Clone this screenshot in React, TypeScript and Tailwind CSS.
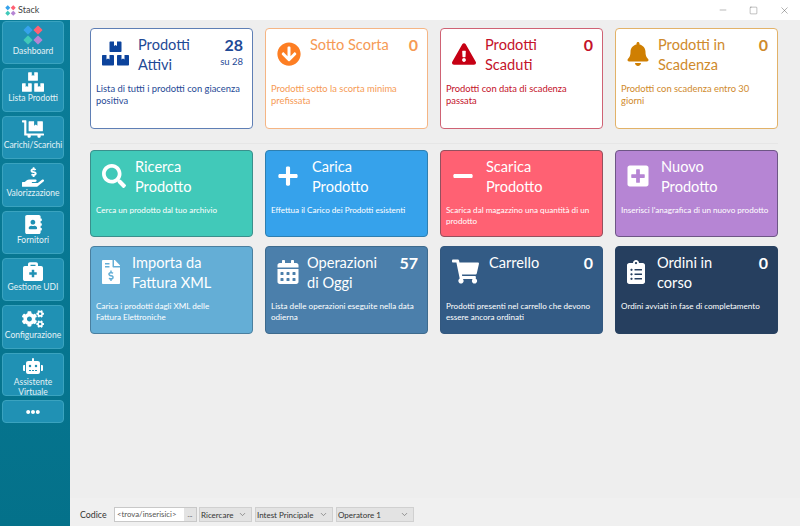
import React from 'react';
import {
  FaAddressBook,
  FaArrowCircleDown,
  FaBell,
  FaBoxes,
  FaBriefcaseMedical,
  FaCalendarAlt,
  FaClipboardList,
  FaCogs,
  FaDollyFlatbed,
  FaEllipsisH,
  FaExclamationTriangle,
  FaFileInvoiceDollar,
  FaHandHoldingUsd,
  FaMinus,
  FaPlus,
  FaPlusSquare,
  FaRobot,
  FaSearch,
  FaShoppingCart,
} from 'react-icons/fa';
import { ChevronDown, Minus, Square, X } from 'lucide-react';

interface CardProps {
  icon: React.ReactNode;
  iconBox: string;
  title: React.ReactNode;
  value?: string;
  sub?: string;
  text: React.ReactNode;
  textSize?: string;
  box: string;
  textColor: string;
}

// Four coloured diamonds, used by the window logo and the Dashboard button
function Diamonds({ size }: { size: number }): React.ReactElement {
  return (
    <svg width={size} height={size} viewBox="0 0 24 24">
      <rect x="2" y="2" width="8" height="8" rx="1" transform="rotate(45 6 6)" fill="#36a2eb" />
      <rect x="14" y="2" width="8" height="8" rx="1" transform="rotate(45 18 6)" fill="#ff6173" />
      <rect x="2" y="14" width="8" height="8" rx="1" transform="rotate(45 6 18)" fill="#41c9b9" />
      <rect x="14" y="14" width="8" height="8" rx="1" transform="rotate(45 18 18)" fill="#b685d4" />
    </svg>
  );
}

function SideButton({
  icon,
  label,
}: {
  icon: React.ReactNode;
  label: React.ReactNode;
}): React.ReactElement {
  return (
    <div className="flex h-[43.4px] w-[62px] flex-col items-center rounded-[4px] border border-[#3aa3bf] bg-[#2091b4] pt-[2px] text-center text-[8.5px] leading-[9.5px] text-[#e4f2f6]">
      <div className="flex h-[21px] shrink-0 items-center justify-center text-white">{icon}</div>
      <div className="mt-[1.5px] whitespace-nowrap">{label}</div>
    </div>
  );
}

function Card({
  icon,
  iconBox,
  title,
  value,
  sub,
  text,
  textSize = 'text-[8.1px] leading-[11px]',
  box,
  textColor,
}: CardProps): React.ReactElement {
  return (
    <div className={`h-full rounded-[4px] border px-[5px] pt-[5px] ${box} ${textColor}`}>
      <div className="flex h-[49px] items-start">
        <div className={`flex h-[38px] shrink-0 items-center justify-start pt-[1px] ${iconBox}`}>{icon}</div>
        <div className="flex-1 pt-[1px] text-[14.6px] leading-[19.5px] font-normal">{title}</div>
        <div className="flex flex-col items-end pt-[1px] pr-[4px]">
          <div className="text-[16px] leading-[20px] font-bold">{value}</div>
          {sub && <div className="mt-[2px] text-[9.5px] leading-[10px]">{sub}</div>}
        </div>
      </div>
      <p className={textSize}>{text}</p>
    </div>
  );
}

function Select({ label, width }: { label: string; width: string }): React.ReactElement {
  return (
    <div className={`flex h-[15px] items-center justify-between border border-[#d0d0d0] bg-[#e3e3e3] pr-[4px] pl-[1px] text-[8px] whitespace-nowrap ${width}`}>
      <span>{label}</span>
      <ChevronDown size={9} className="text-[#777777]" />
    </div>
  );
}

const TOP_TEXT = 'text-[9.4px] leading-[12px]';

export default function App(): React.ReactElement {
  return (
    <div className="flex h-[526px] w-[800px] flex-col overflow-hidden bg-[#eeeeee] font-['Lato',sans-serif]">
      {/* Window title bar */}
      <div className="flex h-[20px] shrink-0 items-center bg-white pl-[5px] text-[9px] text-[#444444]">
        <Diamonds size={11} />
        <span className="ml-[2px]">Stack</span>
        <div className="ml-auto flex items-center gap-[21px] pr-[10px] text-[#555555]">
          <Minus size={10} strokeWidth={1} />
          <Square size={9} strokeWidth={1} />
          <X size={11} strokeWidth={1} />
        </div>
      </div>

      <div className="flex min-h-0 flex-1">
        {/* Left menu */}
        <div className="flex w-[70px] shrink-0 flex-col gap-[4px] bg-gradient-to-b from-[#0b7d99] to-[#04718a] pt-[1px] pl-[2px]">
          <SideButton icon={<Diamonds size={20} />} label="Dashboard" />
          <SideButton icon={<FaBoxes size={22} />} label="Lista Prodotti" />
          <SideButton icon={<FaDollyFlatbed size={22} />} label="Carichi/Scarichi" />
          <SideButton icon={<FaHandHoldingUsd size={22} />} label="Valorizzazione" />
          <SideButton icon={<FaAddressBook size={19} />} label="Fornitori" />
          <SideButton icon={<FaBriefcaseMedical size={20} />} label="Gestione UDI" />
          <SideButton icon={<FaCogs size={22} />} label="Configurazione" />
          <SideButton icon={<FaRobot size={20} />} label={<>Assistente<br />Virtuale</>} />
          <div className="flex h-[23px] w-[62px] items-center justify-center rounded-[4px] border border-[#3aa3bf] bg-[#2091b4] text-white">
            <FaEllipsisH size={14} />
          </div>
        </div>

        {/* Dashboard cards */}
        <div className="flex min-w-0 flex-1 flex-col">
          <div className="flex-1 pt-[8px] pr-[22px] pl-[20px]">
            <div className="grid h-[101px] grid-cols-4 gap-x-[12px]">
              <Card
                box="border-[#5f7fb5] bg-white"
                textColor="text-[#1f4a96]"
                iconBox="w-[42px] pl-[6px] text-[#0c439c]"
                icon={<FaBoxes size={27} />}
                title={<>Prodotti<br />Attivi</>}
                value="28"
                sub="su 28"
                text="Lista di tutti i prodotti con giacenza positiva"
                textSize={TOP_TEXT}
              />
              <Card
                box="border-[#f5b584] bg-white"
                textColor="text-[#f69a55]"
                iconBox="w-[39px] pl-[6px] text-[#fd7e23]"
                icon={<FaArrowCircleDown size={24} />}
                title="Sotto Scorta"
                value="0"
                text="Prodotti sotto la scorta minima prefissata"
                textSize={TOP_TEXT}
              />
              <Card
                box="border-[#cf6274] bg-white"
                textColor="text-[#c4122a]"
                iconBox="w-[39px] pl-[6px] text-[#c60014]"
                icon={<FaExclamationTriangle size={24} />}
                title={<>Prodotti<br />Scaduti</>}
                value="0"
                text="Prodotti con data di scadenza passata"
                textSize={TOP_TEXT}
              />
              <Card
                box="border-[#e2b268] bg-white"
                textColor="text-[#cf8a2c]"
                iconBox="w-[37px] pl-[5px] text-[#cf7f02]"
                icon={<FaBell size={24} />}
                title={<>Prodotti in<br />Scadenza</>}
                value="0"
                text="Prodotti con scadenza entro 30 giorni"
                textSize={TOP_TEXT}
              />
            </div>

            <div className="mt-[14px] mb-[6px] h-px bg-[#e6e6e6]" />

            <div className="grid h-[87px] grid-cols-4 gap-x-[12px]">
              <Card
                box="border-[#3a8f8c] bg-[#41c9b9]"
                textColor="text-white"
                iconBox="w-[39px] pl-[6px]"
                icon={<FaSearch size={24} />}
                title={<>Ricerca<br />Prodotto</>}
                text="Cerca un prodotto dal tuo archivio"
              />
              <Card
                box="border-[#2e7fb0] bg-[#36a2eb]"
                textColor="text-white"
                iconBox="w-[41px] pl-[6px]"
                icon={<FaPlus size={22} />}
                title={<>Carica<br />Prodotto</>}
                text="Effettua il Carico dei Prodotti esistenti"
              />
              <Card
                box="border-[#94505e] bg-[#ff6173]"
                textColor="text-white"
                iconBox="w-[40px] pl-[6px]"
                icon={<FaMinus size={22} />}
                title={<>Scarica<br />Prodotto</>}
                text="Scarica dal magazzino una quantità di un prodotto"
              />
              <Card
                box="border-[#6d5685] bg-[#b685d4]"
                textColor="text-white"
                iconBox="w-[40px] pl-[5px]"
                icon={<FaPlusSquare size={24} />}
                title={<>Nuovo<br />Prodotto</>}
                text="Inserisci l'anagrafica di un nuovo prodotto"
              />
            </div>

            <div className="mt-[9px] grid h-[88px] grid-cols-4 gap-x-[12px]">
              <Card
                box="border-[#4a7f9f] bg-[#64aed6]"
                textColor="text-white"
                iconBox="w-[36px] pl-[3px]"
                icon={<FaFileInvoiceDollar size={24} />}
                title={<>Importa da<br />Fattura XML</>}
                text={<>Carica i prodotti dagli XML delle<br />Fattura Elettroniche</>}
              />
              <Card
                box="border-[#3d6a8d] bg-[#4b7fab]"
                textColor="text-white"
                iconBox="w-[36px] pl-[5px]"
                icon={<FaCalendarAlt size={24} />}
                title={<>Operazioni<br />di Oggi</>}
                value="57"
                text="Lista delle operazioni eseguite nella data odierna"
              />
              <Card
                box="border-[#33587f] bg-[#335b85]"
                textColor="text-white"
                iconBox="w-[43px] pl-[6px]"
                icon={<FaShoppingCart size={27} />}
                title="Carrello"
                value="0"
                text="Prodotti presenti nel carrello che devono essere ancora ordinati"
              />
              <Card
                box="border-[#26405f] bg-[#263f5f]"
                textColor="text-white"
                iconBox="w-[36px] pl-[3px]"
                icon={<FaClipboardList size={24} />}
                title={<>Ordini in<br />corso</>}
                value="0"
                text="Ordini avviati in fase di completamento"
              />
            </div>
          </div>

          {/* Bottom filter bar */}
          <div className="flex h-[28px] shrink-0 items-center bg-[#f0f0f0] pt-[5px] pl-[10px] text-[8.8px] text-[#333333]">
            <span className="w-[34px]">Codice</span>
            <div className="flex h-[15px] w-[83px] items-center border border-[#c8c8c8] bg-white pl-[2px] text-[7.8px] text-[#555555]">
              <span className="flex-1 whitespace-nowrap">&lt;trova/inserisici&gt;</span>
              <div className="flex h-full w-[12px] items-center justify-center bg-[#e3e3e3] text-[7px] leading-none">...</div>
            </div>
            <div className="ml-[2px] flex gap-[3px]">
              <Select label="Ricercare" width="w-[53px]" />
              <Select label="Intest Principale" width="w-[78px]" />
              <Select label="Operatore 1" width="w-[78px]" />
            </div>
          </div>
        </div>
      </div>
    </div>
  );
}
